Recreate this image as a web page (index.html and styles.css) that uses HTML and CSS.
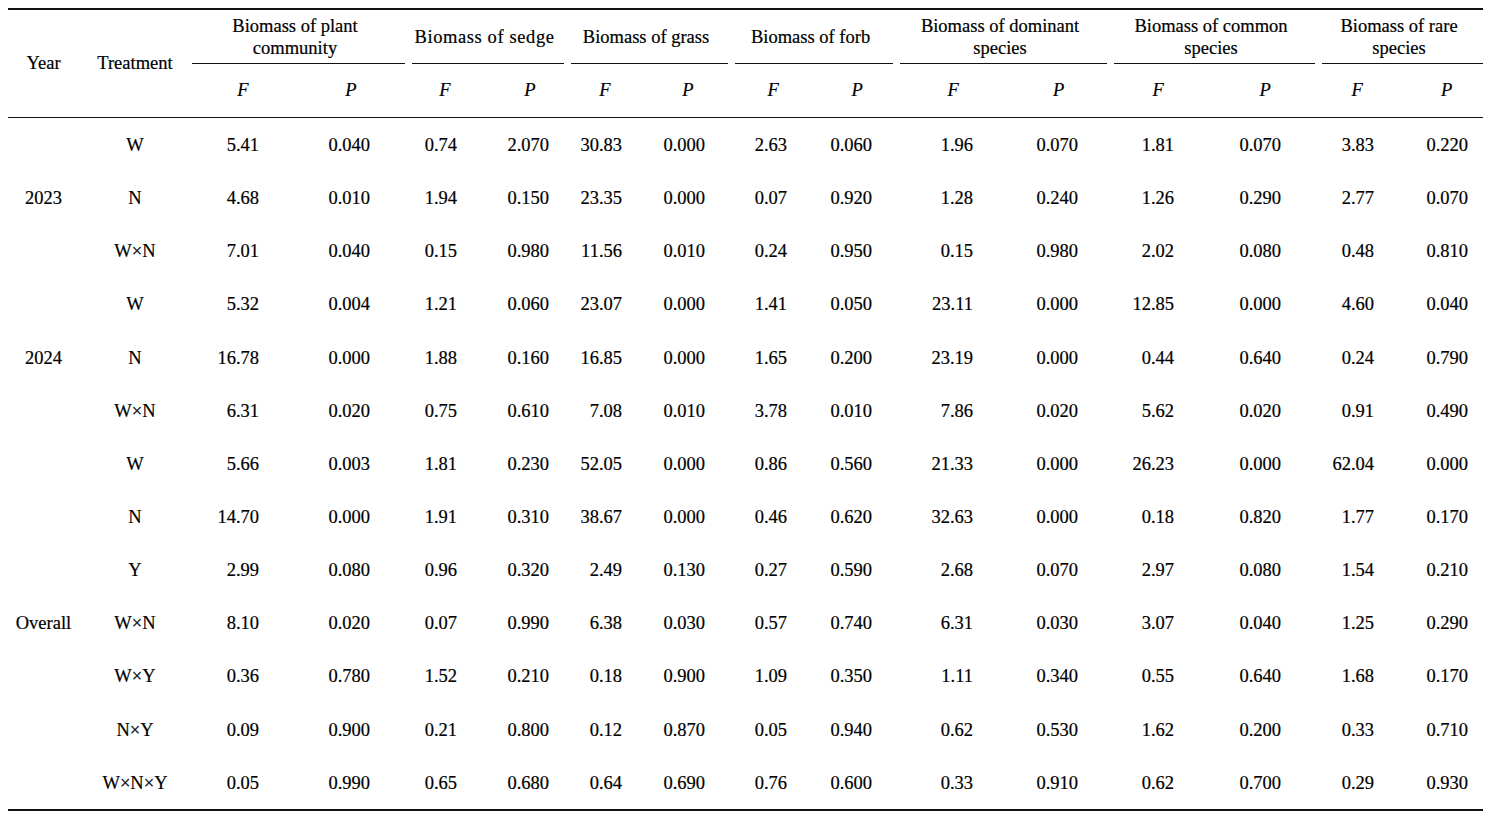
FILE: index.html
```html
<!DOCTYPE html>
<html lang="en">
<head>
<meta charset="utf-8">
<title>ANOVA of biomass</title>
<link rel="stylesheet" href="styles.css">
</head>
<body>
<table class="stats">
  <colgroup>
    <col class="c-year"><col class="c-treat">
    <col class="c-pf"><col class="c-pp">
    <col class="c-sf"><col class="c-sp">
    <col class="c-gf"><col class="c-gp">
    <col class="c-ff"><col class="c-fp">
    <col class="c-df"><col class="c-dp">
    <col class="c-cf"><col class="c-cp">
    <col class="c-rf"><col class="c-rp">
  </colgroup>
  <thead>
    <tr class="head-top">
      <th rowspan="2" class="lbl">Year</th>
      <th rowspan="2" class="lbl treat">Treatment</th>
      <th colspan="2" class="group">Biomass of plant<br>community</th>
      <th colspan="2" class="group group-sedge">Biomass of sedge</th>
      <th colspan="2" class="group">Biomass of grass</th>
      <th colspan="2" class="group">Biomass of forb</th>
      <th colspan="2" class="group">Biomass of dominant<br>species</th>
      <th colspan="2" class="group">Biomass of common<br>species</th>
      <th colspan="2" class="group group-rare">Biomass of rare<br>species</th>
    </tr>
    <tr class="head-sub">
      <th>F</th><th>P</th><th>F</th><th>P</th><th>F</th><th>P</th><th>F</th><th>P</th>
      <th>F</th><th>P</th><th>F</th><th>P</th><th>F</th><th>P</th>
    </tr>
  </thead>
  <tbody>
    <tr><td rowspan="3" class="year">2023</td><td class="treat">W</td>
      <td>5.41</td><td>0.040</td><td>0.74</td><td>2.070</td><td>30.83</td><td>0.000</td><td>2.63</td><td>0.060</td><td>1.96</td><td>0.070</td><td>1.81</td><td>0.070</td><td>3.83</td><td>0.220</td></tr>
    <tr><td class="treat">N</td>
      <td>4.68</td><td>0.010</td><td>1.94</td><td>0.150</td><td>23.35</td><td>0.000</td><td>0.07</td><td>0.920</td><td>1.28</td><td>0.240</td><td>1.26</td><td>0.290</td><td>2.77</td><td>0.070</td></tr>
    <tr><td class="treat">W×N</td>
      <td>7.01</td><td>0.040</td><td>0.15</td><td>0.980</td><td>11.56</td><td>0.010</td><td>0.24</td><td>0.950</td><td>0.15</td><td>0.980</td><td>2.02</td><td>0.080</td><td>0.48</td><td>0.810</td></tr>
    <tr><td rowspan="3" class="year">2024</td><td class="treat">W</td>
      <td>5.32</td><td>0.004</td><td>1.21</td><td>0.060</td><td>23.07</td><td>0.000</td><td>1.41</td><td>0.050</td><td>23.11</td><td>0.000</td><td>12.85</td><td>0.000</td><td>4.60</td><td>0.040</td></tr>
    <tr><td class="treat">N</td>
      <td>16.78</td><td>0.000</td><td>1.88</td><td>0.160</td><td>16.85</td><td>0.000</td><td>1.65</td><td>0.200</td><td>23.19</td><td>0.000</td><td>0.44</td><td>0.640</td><td>0.24</td><td>0.790</td></tr>
    <tr><td class="treat">W×N</td>
      <td>6.31</td><td>0.020</td><td>0.75</td><td>0.610</td><td>7.08</td><td>0.010</td><td>3.78</td><td>0.010</td><td>7.86</td><td>0.020</td><td>5.62</td><td>0.020</td><td>0.91</td><td>0.490</td></tr>
    <tr><td rowspan="7" class="year">Overall</td><td class="treat">W</td>
      <td>5.66</td><td>0.003</td><td>1.81</td><td>0.230</td><td>52.05</td><td>0.000</td><td>0.86</td><td>0.560</td><td>21.33</td><td>0.000</td><td>26.23</td><td>0.000</td><td>62.04</td><td>0.000</td></tr>
    <tr><td class="treat">N</td>
      <td>14.70</td><td>0.000</td><td>1.91</td><td>0.310</td><td>38.67</td><td>0.000</td><td>0.46</td><td>0.620</td><td>32.63</td><td>0.000</td><td>0.18</td><td>0.820</td><td>1.77</td><td>0.170</td></tr>
    <tr><td class="treat">Y</td>
      <td>2.99</td><td>0.080</td><td>0.96</td><td>0.320</td><td>2.49</td><td>0.130</td><td>0.27</td><td>0.590</td><td>2.68</td><td>0.070</td><td>2.97</td><td>0.080</td><td>1.54</td><td>0.210</td></tr>
    <tr><td class="treat">W×N</td>
      <td>8.10</td><td>0.020</td><td>0.07</td><td>0.990</td><td>6.38</td><td>0.030</td><td>0.57</td><td>0.740</td><td>6.31</td><td>0.030</td><td>3.07</td><td>0.040</td><td>1.25</td><td>0.290</td></tr>
    <tr><td class="treat">W×Y</td>
      <td>0.36</td><td>0.780</td><td>1.52</td><td>0.210</td><td>0.18</td><td>0.900</td><td>1.09</td><td>0.350</td><td>1.11</td><td>0.340</td><td>0.55</td><td>0.640</td><td>1.68</td><td>0.170</td></tr>
    <tr><td class="treat">N×Y</td>
      <td>0.09</td><td>0.900</td><td>0.21</td><td>0.800</td><td>0.12</td><td>0.870</td><td>0.05</td><td>0.940</td><td>0.62</td><td>0.530</td><td>1.62</td><td>0.200</td><td>0.33</td><td>0.710</td></tr>
    <tr><td class="treat">W×N×Y</td>
      <td>0.05</td><td>0.990</td><td>0.65</td><td>0.680</td><td>0.64</td><td>0.690</td><td>0.76</td><td>0.600</td><td>0.33</td><td>0.910</td><td>0.62</td><td>0.700</td><td>0.29</td><td>0.930</td></tr>
  </tbody>
</table>
</body>
</html>
```

FILE: styles.css
```css
body {
  margin: 8px;
  background: #fff;
  color: #000;
  font-family: "Liberation Serif", "Times New Roman", serif;
  font-size: 18.5px;
  -webkit-text-stroke: 0.2px #000;
}

.stats {
  width: 1475px;
  table-layout: fixed;
  border-collapse: separate;
  border-spacing: 0;
  border-top: 2px solid #111;
  border-bottom: 2px solid #111;
}

.stats th,
.stats td {
  padding: 0;
  font-weight: normal;
  vertical-align: middle;
  white-space: nowrap;
}

/* column widths */
.c-year  { width: 71px; }
.c-treat { width: 106px; }
.c-pf { width: 115px; } .c-pp { width: 105px; }
.c-sf { width: 85px; }  .c-sp { width: 74px; }
.c-gf { width: 86px; }  .c-gp { width: 78px; }
.c-ff { width: 87px; }  .c-fp { width: 78px; }
.c-df { width: 117px; } .c-dp { width: 97px; }
.c-cf { width: 108px; } .c-cp { width: 100px; }
.c-rf { width: 95px; }  .c-rp { width: 73px; }

/* header */
.head-top { height: 54px; }
.head-sub { height: 54px; }

.lbl {
  text-align: center;
  border-bottom: 1px solid #111;
}
.lbl.treat { padding-left: 6px; }

.group {
  text-align: center;
  line-height: 22px;
  padding-top: 4px;
  padding-left: 15px;
  background: linear-gradient(#111, #111) right bottom / calc(100% - 7px) 1px no-repeat;
}
.group-sedge {
  padding-left: 7px;
  letter-spacing: 0.6px;
}
.group-rare { padding-left: 19px; }

.head-sub th {
  font-style: italic;
  text-align: center;
  border-bottom: 1px solid #111;
}
.head-sub th:nth-child(1)  { padding-left: 1px; }
.head-sub th:nth-child(2)  { padding-right: 3px; }
.head-sub th:nth-child(3)  { padding-right: 5px; }
.head-sub th:nth-child(4)  { padding-left: 6px; }
.head-sub th:nth-child(5)  { padding-right: 4px; }
.head-sub th:nth-child(6)  { padding-right: 2px; }
.head-sub th:nth-child(7)  { padding-left: 3px; }
.head-sub th:nth-child(8)  { padding-left: 6px; }
.head-sub th:nth-child(9)  { padding-left: 3px; }
.head-sub th:nth-child(11) { padding-right: 6px; }
.head-sub th:nth-child(13) { padding-right: 11px; }

/* body */
.stats tbody tr { height: 53.15px; }

.stats tbody td { text-align: right; padding-top: 2px; }
.stats tbody td.year { text-align: center; }
.stats tbody td.treat { text-align: center; padding-left: 6px; }

.stats tbody td:nth-last-child(14) { padding-right: 41px; }
.stats tbody td:nth-last-child(13) { padding-right: 35px; }
.stats tbody td:nth-last-child(12) { padding-right: 33px; }
.stats tbody td:nth-last-child(11) { padding-right: 15px; }
.stats tbody td:nth-last-child(10) { padding-right: 28px; }
.stats tbody td:nth-last-child(9)  { padding-right: 23px; }
.stats tbody td:nth-last-child(8)  { padding-right: 28px; }
.stats tbody td:nth-last-child(7)  { padding-right: 21px; }
.stats tbody td:nth-last-child(6)  { padding-right: 37px; }
.stats tbody td:nth-last-child(5)  { padding-right: 29px; }
.stats tbody td:nth-last-child(4)  { padding-right: 41px; }
.stats tbody td:nth-last-child(3)  { padding-right: 34px; }
.stats tbody td:nth-last-child(2)  { padding-right: 36px; }
.stats tbody td:nth-last-child(1)  { padding-right: 15px; }
```
